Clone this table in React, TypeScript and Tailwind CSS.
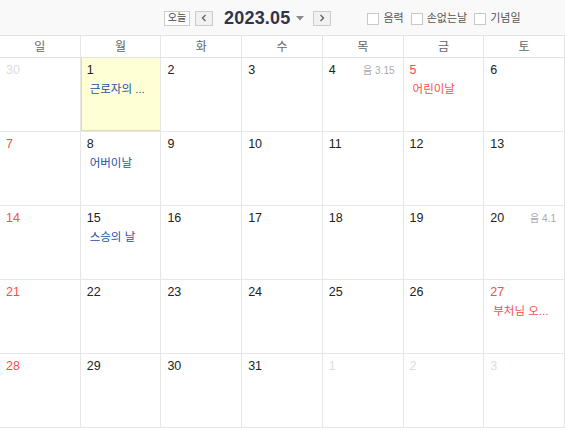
import React from "react";

type Day = {
  n: number;
  muted?: boolean;
  red?: boolean;
  today?: boolean;
  lunar?: string;
  event?: string;
  eventRed?: boolean;
};

const weekdays = ["일", "월", "화", "수", "목", "금", "토"];

const weeks: Day[][] = [
  [
    { n: 30, muted: true },
    { n: 1, today: true, event: "근로자의 ..." },
    { n: 2 },
    { n: 3 },
    { n: 4, lunar: "음 3.15" },
    { n: 5, red: true, event: "어린이날", eventRed: true },
    { n: 6 },
  ],
  [
    { n: 7, red: true },
    { n: 8, event: "어버이날" },
    { n: 9 },
    { n: 10 },
    { n: 11 },
    { n: 12 },
    { n: 13 },
  ],
  [
    { n: 14, red: true },
    { n: 15, event: "스승의 날" },
    { n: 16 },
    { n: 17 },
    { n: 18 },
    { n: 19 },
    { n: 20, lunar: "음 4.1" },
  ],
  [
    { n: 21, red: true },
    { n: 22 },
    { n: 23 },
    { n: 24 },
    { n: 25 },
    { n: 26 },
    { n: 27, red: true, event: "부처님 오...", eventRed: true },
  ],
  [
    { n: 28, red: true },
    { n: 29 },
    { n: 30 },
    { n: 31 },
    { n: 1, muted: true },
    { n: 2, muted: true },
    { n: 3, muted: true },
  ],
];

function Check({ label }: { label: string }) {
  return (
    <label className="flex items-center gap-[4px] text-[11px] text-[#555]">
      <span className="w-[12px] h-[12px] border border-[#c8c8c8] bg-white block" />
      {label}
    </label>
  );
}

function Cell({ d }: { d: Day }) {
  const color = d.muted
    ? "text-[#dcdcdc]"
    : d.red
    ? "text-[#ff4b4b]"
    : "text-[#222]";
  return (
    <div
      className={`relative border-r border-[#e6e6e6] px-[6px] pt-[3px] ${
        d.today ? "bg-[#ffffd6] shadow-[inset_1px_0_0_#dcdcb0,inset_0_-1px_0_#dcdcb0]" : ""
      }`}
    >
      <div className="flex justify-between items-baseline">
        <span className={`text-[12.5px] font-medium ${color}`}>{d.n}</span>
        {d.lunar && (
          <span className="text-[10px] text-[#aaa] pr-[2px]">{d.lunar}</span>
        )}
      </div>
      {d.event && (
        <div
          className={`pl-[3px] mt-[1px] text-[11.5px] ${
            d.eventRed ? "text-[#ff4b4b]" : "text-[#1d4fa8]"
          }`}
        >
          {d.event}
        </div>
      )}
    </div>
  );
}

export default function App() {
  return (
    <div
      className="w-[565px] h-[431px] bg-white overflow-hidden"
      style={{ fontFamily: '"Liberation Sans", "Noto Sans CJK KR", sans-serif' }}
    >
      <div className="h-[35px] bg-[#f9f9f9] flex items-center relative">
        <div className="flex items-center ml-[164px] mt-[1px]">
          <button className="w-[26px] h-[15px] border border-[#ccc] bg-white text-[10px] text-[#444] leading-none flex items-center justify-center">
            오늘
          </button>
          <button className="ml-[5px] w-[18px] h-[15px] border border-[#ccc] bg-[#f1f1f1] flex items-center justify-center">
            <svg width="6" height="8" viewBox="0 0 6 8">
              <path d="M4.5 1 L1.5 4 L4.5 7" fill="none" stroke="#666" strokeWidth="1.4" />
            </svg>
          </button>
          <span className="ml-[11px] text-[18px] font-bold text-[#32344a] leading-none tracking-[0.2px]">
            2023.05
          </span>
          <svg className="ml-[6px]" width="8" height="5" viewBox="0 0 8 5">
            <path d="M0 0 L8 0 L4 4.5 Z" fill="#8a8a8a" />
          </svg>
          <button className="ml-[9px] w-[18px] h-[15px] border border-[#ccc] bg-[#f1f1f1] flex items-center justify-center">
            <svg width="6" height="8" viewBox="0 0 6 8">
              <path d="M1.5 1 L4.5 4 L1.5 7" fill="none" stroke="#666" strokeWidth="1.4" />
            </svg>
          </button>
        </div>
        <div className="flex items-center gap-[7px] ml-[36px] mt-[2px]">
          <Check label="음력" />
          <Check label="손없는날" />
          <Check label="기념일" />
        </div>
      </div>
      <div className="border-t border-[#e2e2e2]">
        <div className="grid grid-cols-7 h-[22px] border-b border-[#e2e2e2]">
          {weekdays.map((w) => (
            <div
              key={w}
              className="border-r border-[#e6e6e6] flex items-center justify-center text-[12px] text-[#666]"
            >
              {w}
            </div>
          ))}
        </div>
        {weeks.map((week, i) => (
          <div
            key={i}
            className="grid grid-cols-7 h-[74px] border-b border-[#e6e6e6]"
          >
            {week.map((d, j) => (
              <Cell key={j} d={d} />
            ))}
          </div>
        ))}
      </div>
    </div>
  );
}
